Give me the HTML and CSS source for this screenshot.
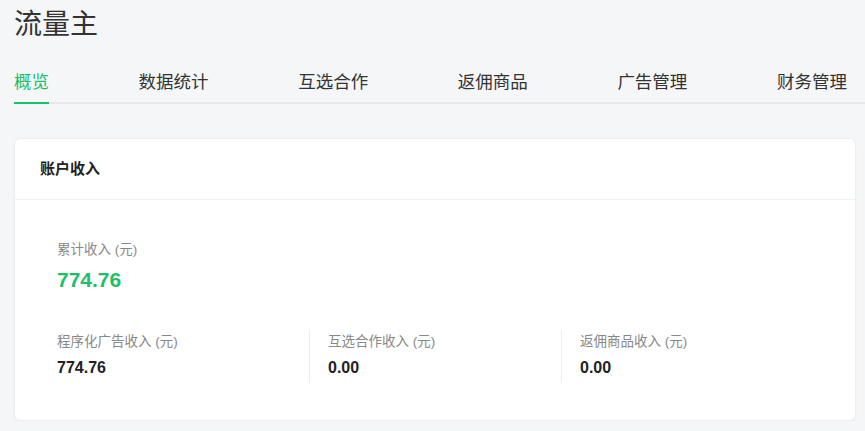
FILE: index.html
```html
<!DOCTYPE html>
<html lang="zh-CN">
<head>
<meta charset="utf-8">
<title>流量主</title>
<link rel="stylesheet" href="styles.css">
</head>
<body>
<div class="page">
  <h1 class="title">流量主</h1>
  <nav class="tabs">
    <a class="tab active">概览</a>
    <a class="tab">数据统计</a>
    <a class="tab">互选合作</a>
    <a class="tab">返佣商品</a>
    <a class="tab">广告管理</a>
    <a class="tab">财务管理</a>
  </nav>
  <section class="card">
    <div class="card-head">账户收入</div>
    <div class="card-body">
      <div class="total">
        <div class="label">累计收入 (元)</div>
        <div class="big">774.76</div>
      </div>
      <div class="cols">
        <div class="col">
          <div class="label">程序化广告收入 (元)</div>
          <div class="value">774.76</div>
        </div>
        <div class="col sep">
          <div class="label">互选合作收入 (元)</div>
          <div class="value">0.00</div>
        </div>
        <div class="col sep">
          <div class="label">返佣商品收入 (元)</div>
          <div class="value">0.00</div>
        </div>
      </div>
    </div>
  </section>
</div>
</body>
</html>
```

FILE: styles.css
```css
html, body {
  margin: 0;
  padding: 0;
  background: #f5f6f8;
}
body {
  font-family: "Liberation Sans", "Noto Sans CJK SC", sans-serif;
  color: #333;
}
.page {
  padding: 7px 0 0 14px;
}
.title {
  margin: 0;
  font-size: 28px;
  line-height: 36px;
  font-weight: 400;
  color: #333;
}
.tabs {
  margin-top: 27px;
  display: flex;
  justify-content: space-between;
  padding-right: 18px;
  border-bottom: 2px solid #e6e8eb;
}
.tab {
  font-size: 17.5px;
  line-height: 24px;
  color: #333;
  padding-bottom: 8px;
  border-bottom: 2px solid transparent;
  margin-bottom: -2px;
}
.tab.active {
  color: #1dbf68;
  border-bottom-color: #1dbf68;
}
.card {
  margin: 34px 9px 0 0;
  background: #fff;
  border: 1px solid #ebedf0;
  border-radius: 6px;
  box-shadow: 0 1px 2px rgba(0, 0, 0, 0.03);
}
.card-head {
  padding: 19px 25px 19px 25px;
  font-size: 15px;
  line-height: 22px;
  font-weight: 700;
  color: #222;
  border-bottom: 1px solid #f0f1f3;
}
.card-body {
  padding: 40px 42px 37px 42px;
}
.label {
  font-size: 13.5px;
  line-height: 20px;
  color: #888;
}
.big {
  margin-top: 6px;
  font-size: 21px;
  line-height: 28px;
  font-weight: 700;
  color: #1dbf68;
}
.cols {
  margin-top: 36px;
  display: grid;
  grid-template-columns: repeat(3, 1fr);
}
.col {
  padding: 2px 0 3px 0;
}
.col.sep {
  border-left: 1px solid #eceef1;
  padding-left: 18px;
}
.value {
  margin-top: 4px;
  font-size: 16px;
  line-height: 24px;
  font-weight: 700;
  color: #222;
}
```
